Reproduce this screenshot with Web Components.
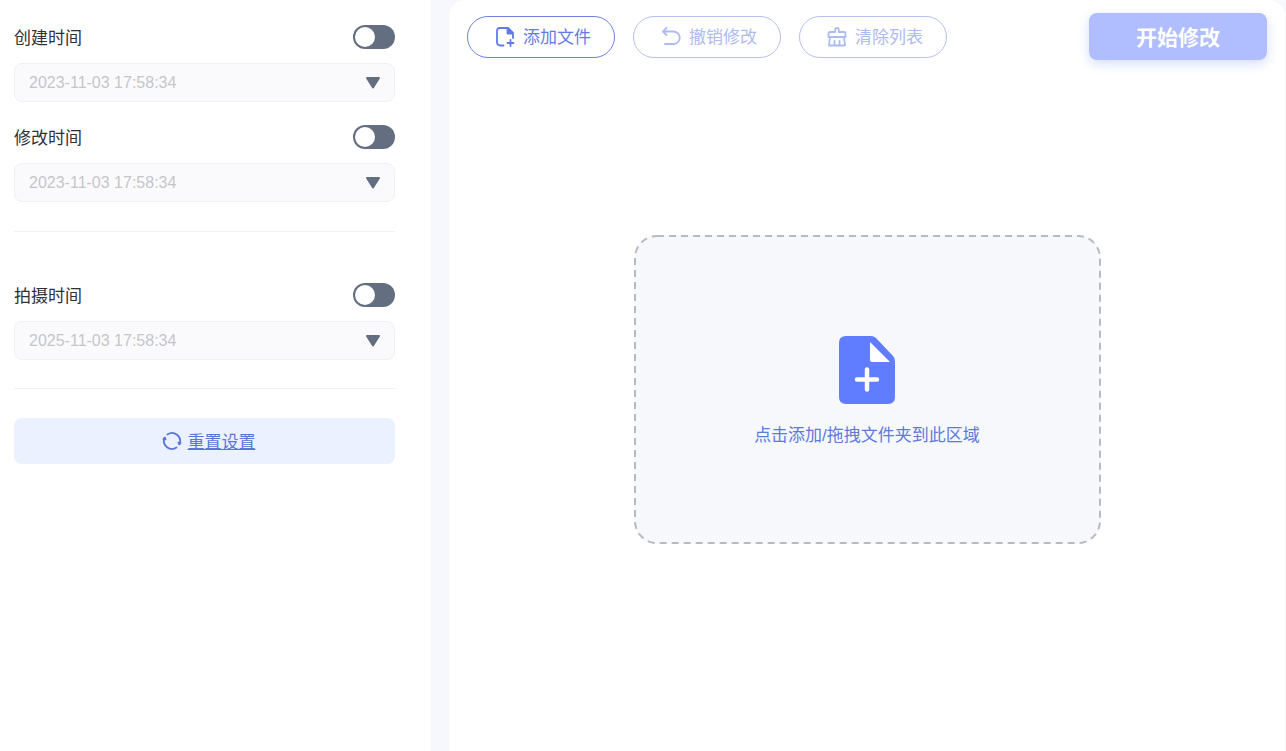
<!DOCTYPE html>
<html lang="zh-CN">
<head>
<meta charset="utf-8">
<title>修改时间</title>
<style>
  body {
    margin: 0;
    background: #f6f8fd;
    color: #303036;
    font: 17px/24px "Liberation Sans", "Noto Sans CJK SC", sans-serif;
  }
</style>
</head>
<body>
<time-app></time-app>
<script>
  const base = `
    *, *::before, *::after { box-sizing: border-box; }
    button, select, input { font: inherit; margin: 0; }
    svg { display: block; flex: none; }
    .text { padding-top: 3px; }
  `;

  class BaseElement extends HTMLElement {
    connectedCallback() {
      if (this.shadowRoot) return;
      this.attachShadow({ mode: 'open' }).innerHTML = `<style>${base}</style>` + this.render();
    }
  }

  // Small outline icons that take the colour of their button.
  const icons = {
    add: `<path d="M8.500 18.500H5a3 3 0 0 1-3-3V4a3 3 0 0 1 3-3h8L18 6v5"/><path d="M12.500 1.500v5h5z" fill="currentColor"/><path d="M15.500 13v6M12.500 16h6"/>`,
    undo: `<path d="M5.500 1 2 4.500 5.500 8"/><path d="M2.500 4.500h10a6 6 0 0 1 0 12.500H4"/>`,
    clear: `<path d="M8.200 5V2.800a1.800 1.800 0 0 1 3.600 0V5H17a1.500 1.500 0 0 1 1.500 1.500v3.500h-17V6.500A1.500 1.500 0 0 1 3 5z"/><path d="M3 10l-1 8.500h16L17 10M7.500 18v-4M12.500 18v-4"/>`,
    reset: `<path d="M5.500 3.500A8 8 0 0 1 17.500 13"/><path d="M14.500 16.500A8 8 0 0 1 2.500 7"/><path d="m19 12.300-2 1.800-1-2.600zM1 7.700l2-1.800 1 2.600z" fill="currentColor" stroke-width="1"/>`
  };
  const icon = (name, size = 20) => `
    <svg width="${size}" height="${size}" viewBox="0 0 20 20" fill="none" stroke="currentColor"
      stroke-width="1.800" stroke-linecap="round" stroke-linejoin="round" aria-hidden="true">${icons[name]}</svg>`;

  customElements.define('toggle-switch', class extends BaseElement {
    render() {
      return `
        <style>
          :host { display: block; }
          input {
            appearance: none;
            display: flex;
            align-items: center;
            width: 42px;
            height: 24px;
            padding: 2px;
            border-radius: 12px;
            background: #636e80;
          }
          input::before {
            content: "";
            width: 20px;
            height: 20px;
            border-radius: 50%;
            background: #fff;
          }
          input:checked { justify-content: flex-end; background: #617dff; }
        </style>
        <input type="checkbox" role="switch" aria-label="${this.getAttribute('label')}">`;
    }
  });

  customElements.define('time-field', class extends BaseElement {
    render() {
      const label = this.getAttribute('label');
      return `
        <style>
          :host { display: flex; flex-direction: column; gap: 14px; }
          .head { display: flex; align-items: center; justify-content: space-between; height: 24px; }
          .box { display: grid; align-items: center; height: 39px; }
          .box > * { grid-area: 1 / 1; }
          select {
            appearance: none;
            width: 100%;
            height: 39px;
            padding: 0 40px 0 14px;
            border: 1px solid #f0f1f5;
            border-radius: 8px;
            background: #fafafc;
            color: #c5c6ca;
            font-size: 16px;
            opacity: 1;
          }
          svg { justify-self: end; margin-right: 14px; pointer-events: none; }
        </style>
        <div class="head">
          <label class="text" for="time">${label}</label>
          <toggle-switch label="${label}"></toggle-switch>
        </div>
        <div class="box">
          <select id="time" disabled><option>${this.getAttribute('value')}</option></select>
          <svg width="16" height="12" viewBox="0 0 16 12" aria-hidden="true">
            <path d="M2 1h12L8 10.500z" fill="#636e80" stroke="#636e80" stroke-width="2" stroke-linejoin="round"/>
          </svg>
        </div>`;
    }
  });

  customElements.define('settings-panel', class extends BaseElement {
    render() {
      return `
        <style>
          :host { display: block; padding: 25px 36px 25px 14px; background: #fff; }
          .group { display: flex; flex-direction: column; gap: 23px; }
          hr { height: 1px; margin: 29px 0 51px; border: 0; background: #f0f0f3; }
          hr.last { margin: 28px 0 29px; }
          button {
            display: flex;
            align-items: center;
            justify-content: center;
            gap: 6px;
            width: 100%;
            height: 46px;
            padding: 0 0 0 8px;
            border: 0;
            border-radius: 8px;
            background: #ebf1ff;
            color: #5b74d8;
          }
          .text { text-decoration: underline; text-underline-offset: 1px; text-decoration-thickness: 1px; }
        </style>
        <div class="group">
          <time-field label="创建时间" value="2023-11-03 17:58:34"></time-field>
          <time-field label="修改时间" value="2023-11-03 17:58:34"></time-field>
        </div>
        <hr>
        <time-field label="拍摄时间" value="2025-11-03 17:58:34"></time-field>
        <hr class="last">
        <button type="button">${icon('reset')}<span class="text">重置设置</span></button>`;
    }
  });

  customElements.define('tool-button', class extends BaseElement {
    render() {
      const off = this.hasAttribute('disabled') ? 'disabled' : '';
      return `
        <style>
          :host { display: block; }
          button {
            display: flex;
            align-items: center;
            justify-content: center;
            gap: 8px;
            width: 148px;
            height: 42px;
            padding: 0 0 0 4px;
            border: 1px solid #6f82dc;
            border-radius: 21px;
            background: #fff;
            color: #627be4;
          }
          button:disabled { border-color: #b6c1ee; color: #aebbf0; }
        </style>
        <button type="button" ${off}>${icon(this.getAttribute('icon'))}<span class="text"><slot></slot></span></button>`;
    }
  });

  customElements.define('start-button', class extends BaseElement {
    render() {
      return `
        <style>
          :host { display: block; margin-left: auto; }
          button {
            width: 178px;
            height: 47px;
            padding: 2px 0 0;
            border: 0;
            border-radius: 8px;
            background: #b0bdff;
            box-shadow: 0 4px 12px #d5deff;
            color: #fff;
            font-size: 21px;
            font-weight: bold;
          }
        </style>
        <button type="button" disabled><slot></slot></button>`;
    }
  });

  customElements.define('drop-zone', class extends BaseElement {
    render() {
      return `
        <style>
          :host { display: block; }
          button {
            position: relative;
            display: flex;
            flex-direction: column;
            align-items: center;
            justify-content: center;
            gap: 17px;
            width: 467px;
            max-width: 100%;
            height: 309px;
            padding: 5px 0 0;
            border: 0;
            border-radius: 23px;
            background: #f7f8fc;
            color: #6079dc;
          }
          .outline { position: absolute; inset: 0; width: 100%; height: 100%; }
          rect { x: 1px; y: 1px; width: calc(100% - 2px); height: calc(100% - 2px); }
        </style>
        <button type="button">
          <svg class="outline" aria-hidden="true">
            <rect rx="22" fill="none" stroke="#b8bac4" stroke-width="2" stroke-dasharray="7 5"/>
          </svg>
          <svg width="56" height="68" viewBox="0 0 56 68" aria-hidden="true">
            <path d="M7 0h25q3 0 5 2l17 18q2 2 2 5v36q0 7-7 7H7q-7 0-7-7V7q0-7 7-7z" fill="#617dff"/>
            <path d="M31 6v18q0 2 2 2h18z" fill="#fff"/>
            <path d="M28 33.500v20M18 43.500h20" stroke="#fff" stroke-width="4.500" stroke-linecap="round"/>
          </svg>
          <span class="text"><slot></slot></span>
        </button>`;
    }
  });

  customElements.define('work-area', class extends BaseElement {
    render() {
      return `
        <style>
          :host {
            display: flex;
            flex-direction: column;
            padding: 13px 18px 32px;
            border-radius: 16px 16px 0 0;
            background: #fff;
          }
          .bar { display: flex; align-items: center; gap: 18px; }
          .content { flex: 1; display: flex; align-items: center; justify-content: center; }
        </style>
        <div class="bar">
          <tool-button icon="add">添加文件</tool-button>
          <tool-button icon="undo" disabled>撤销修改</tool-button>
          <tool-button icon="clear" disabled>清除列表</tool-button>
          <start-button>开始修改</start-button>
        </div>
        <div class="content"><drop-zone>点击添加/拖拽文件夹到此区域</drop-zone></div>`;
    }
  });

  customElements.define('time-app', class extends BaseElement {
    render() {
      return `
        <style>
          :host { display: flex; box-sizing: border-box; gap: 18px; min-height: 100vh; padding-right: 1px; }
          settings-panel { flex: 0 0 431px; box-sizing: border-box; }
          work-area { flex: 1; min-width: 0; box-sizing: border-box; }
        </style>
        <settings-panel></settings-panel>
        <work-area></work-area>`;
    }
  });
</script>
</body>
</html>
